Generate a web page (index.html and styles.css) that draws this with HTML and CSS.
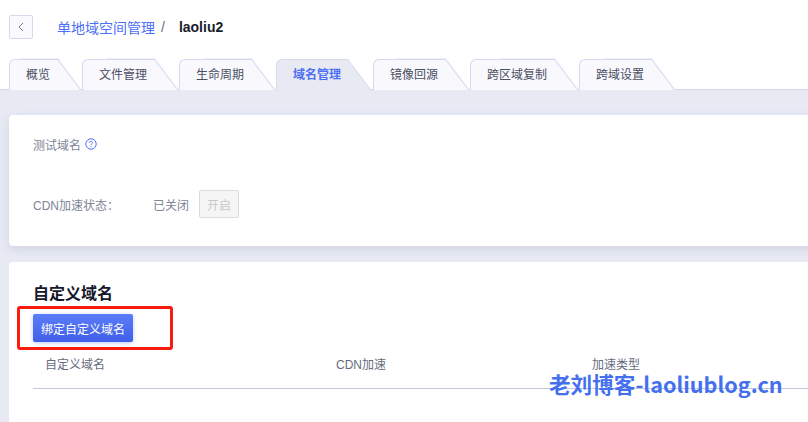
FILE: index.html
```html
<!DOCTYPE html>
<html lang="zh-CN">

<head>
    <meta charset="UTF-8">
    <meta name="viewport" content="width=device-width, initial-scale=1.0">
    <title>域名管理</title>
    <link rel="stylesheet" href="styles.css">
</head>

<body>
    <div class="page">
        <div class="header">
            <button class="back-button">
                <svg width="6" height="10" viewBox="0 0 6 10"><path d="M5 1 1 5l4 4" fill="none" stroke="#77798c" stroke-width="1"/></svg>
            </button>
            <a class="crumb-link">单地域空间管理</a>
            <span class="crumb-sep">/</span>
            <span class="crumb-name">laoliu2</span>
        </div>

        <div class="tabs">
            <div class="tab tab-short">概览</div>
            <div class="tab">文件管理</div>
            <div class="tab">生命周期</div>
            <div class="tab active">域名管理</div>
            <div class="tab">镜像回源</div>
            <div class="tab tab-long">跨区域复制</div>
            <div class="tab">跨域设置</div>
        </div>

        <div class="content">
            <div class="panel panel-test">
                <div class="test-title">
                    测试域名
                    <svg class="help-icon" width="12" height="12" viewBox="0 0 12 12">
                        <circle cx="6" cy="6" r="5.2" fill="none" stroke="#4f6ef7" stroke-width="1"/>
                        <path d="M4.5 4.8C4.5 3.9 5.2 3.4 6 3.4s1.5.5 1.5 1.3c0 1.2-1.5 1.2-1.5 2.3" fill="none" stroke="#4f6ef7" stroke-width="1"/>
                        <path d="M6 8v1" stroke="#4f6ef7" stroke-width="1"/>
                    </svg>
                </div>
                <div class="cdn-row">
                    <span class="cdn-label">CDN加速状态：</span>
                    <span class="cdn-status">已关闭</span>
                    <button class="open-button" disabled>开启</button>
                </div>
            </div>

            <div class="panel panel-custom">
                <h2>自定义域名</h2>
                <button class="bind-button">绑定自定义域名</button>
                <div class="table-head">
                    <div class="col-name">自定义域名</div>
                    <div class="col-cdn">CDN加速</div>
                    <div class="col-type">加速类型</div>
                </div>
            </div>
        </div>

        <div class="red-box"></div>
        <div class="watermark">老刘博客-laoliublog.cn</div>
    </div>
</body>

</html>
```

FILE: styles.css
```css
* {
    box-sizing: border-box;
}

html,
body {
    margin: 0;
    height: 100%;
    overflow: hidden;
}

body {
    font-family: "Liberation Sans", "Noto Sans CJK SC", sans-serif;
    background-color: #ffffff;
}

.page {
    position: relative;
    width: 808px;
    height: 422px;
    overflow: hidden;
}

.header {
    display: flex;
    align-items: center;
    height: 59px;
    padding: 0 0 5px 9px;
}

.back-button {
    display: flex;
    align-items: center;
    justify-content: center;
    width: 24px;
    height: 24px;
    padding: 0;
    background-color: #fafafe;
    border: 1px solid #d5d9ef;
    border-radius: 2px;
}

.crumb-link {
    margin-left: 24px;
    font-size: 14px;
    color: #4d6ef5;
}

.crumb-sep {
    margin-left: 6px;
    font-size: 14px;
    color: #666a80;
}

.crumb-name {
    margin-left: 14px;
    font-size: 14px;
    font-weight: bold;
    color: #1a1c2b;
}

.tabs {
    display: flex;
    height: 31px;
    padding-left: 9px;
    gap: 1px;
    border-bottom: 1px solid #d3d8ec;
}

.tab {
    position: relative;
    width: 96px;
    height: 31px;
    padding: 8px 0 0 17px;
    font-size: 12px;
    line-height: 16px;
    color: #4a4f63;
    z-index: 1;
}

.tab::before {
    content: "";
    position: absolute;
    top: 0;
    left: 0;
    bottom: 0;
    width: 70%;
    background-color: #f9f9fd;
    border: 1px solid #d5d9ef;
    border-right: none;
    border-bottom: none;
    border-radius: 6px 0 0 0;
    z-index: -1;
}

.tab::after {
    content: "";
    position: absolute;
    top: 0;
    right: 0;
    bottom: 0;
    width: 50%;
    background-color: #f9f9fd;
    border-top: 1px solid #d5d9ef;
    border-right: 1px solid #d5d9ef;
    box-shadow: 1px -1px 0 #eceef9;
    transform: skewX(37deg);
    transform-origin: bottom right;
    z-index: -1;
}

.tab-short {
    width: 72px;
}

.tab-long {
    width: 108px;
}

.tab.active {
    color: #4d6ef5;
    font-weight: bold;
    height: 32px;
}

.tab.active::before,
.tab.active::after {
    background-color: #e7eaf3;
    border-color: #d8dbe8;
    box-shadow: none;
}

.content {
    padding: 25px 0 0 9px;
    background-color: #e7eaf3;
    height: 332px;
}

.panel {
    width: 830px;
    background-color: #ffffff;
    border-radius: 4px;
}

.panel-test {
    height: 131px;
    padding: 21px 24px 0;
    box-shadow: 0 3px 8px rgba(120, 125, 160, 0.2);
}

.test-title {
    display: flex;
    align-items: center;
    gap: 4px;
    height: 16px;
    font-size: 12px;
    color: #7e8596;
}

.cdn-row {
    display: flex;
    align-items: center;
    margin-top: 38px;
    font-size: 12px;
    color: #7e8596;
}

.cdn-label {
    width: 120px;
}

.cdn-status {
    width: 46px;
}

.open-button {
    width: 40px;
    height: 28px;
    padding: 0;
    font-size: 12px;
    font-family: inherit;
    color: #c8c8c8;
    background-color: #f5f5f5;
    border: 1px solid #dcdcdc;
    border-radius: 2px;
}

.panel-custom {
    height: 170px;
    margin-top: 16px;
    padding: 22px 24px 0;
}

.panel-custom h2 {
    margin: 0;
    font-size: 16px;
    line-height: 20px;
    font-weight: bold;
    color: #15172a;
}

.bind-button {
    display: block;
    width: 100px;
    height: 28px;
    margin-top: 10px;
    padding: 0;
    font-size: 12px;
    font-family: inherit;
    color: #ffffff;
    background: linear-gradient(180deg, #5b7dfa, #3f5fe8);
    border: none;
    border-radius: 2px;
    box-shadow: 0 1px 4px rgba(70, 100, 230, 0.35);
}

.table-head {
    display: flex;
    width: 775px;
    height: 38px;
    margin-top: 9px;
    padding-top: 7px;
    font-size: 12px;
    line-height: 14px;
    color: #666c7e;
    border-bottom: 1px solid #c3c8dc;
}

.col-name {
    width: 303px;
    padding-left: 12px;
}

.col-cdn {
    width: 256px;
}

/* annotation and watermark sit on top of the screenshot */
.red-box {
    position: absolute;
    left: 17px;
    top: 306px;
    width: 156px;
    height: 44px;
    border: 3px solid #fb1a10;
    border-radius: 3px;
}

.watermark {
    position: absolute;
    left: 549px;
    top: 373px;
    font-family: "Noto Sans CJK SC", sans-serif;
    font-size: 21.6px;
    line-height: 22px;
    font-weight: 700;
    color: #4470f0;
    white-space: nowrap;
}
```
